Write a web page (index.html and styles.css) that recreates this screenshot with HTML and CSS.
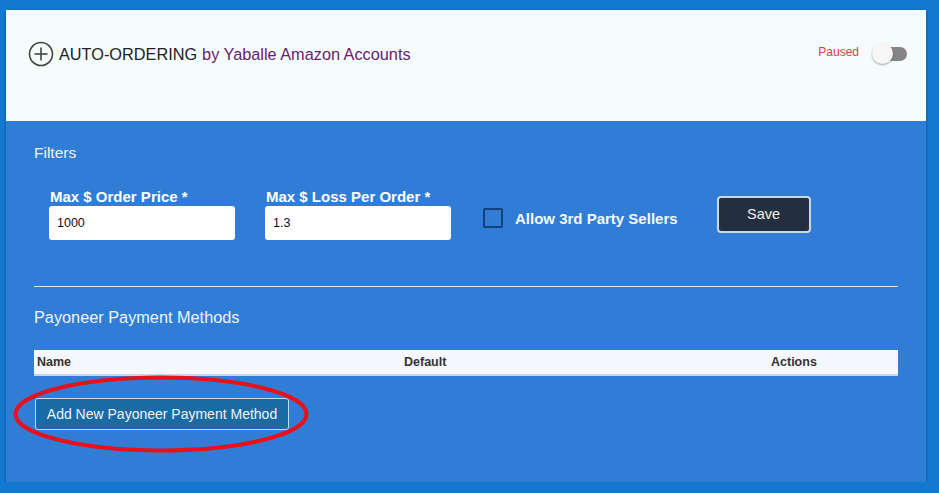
FILE: index.html
```html
<!DOCTYPE html>
<html lang="en">
<head>
    <meta charset="UTF-8">
    <title>Auto-Ordering</title>
    <link rel="stylesheet" href="styles.css">
</head>
<body>
    <div class="card">
        <!-- Cabecera -->
        <div class="card-header">
            <div class="titulo">
                <svg class="icono-mas" width="26" height="26" viewBox="0 0 26 26">
                    <circle cx="13" cy="13" r="11.5" fill="none" stroke="#444" stroke-width="1.6"/>
                    <line x1="13" y1="6.5" x2="13" y2="19.5" stroke="#444" stroke-width="1.6"/>
                    <line x1="6.5" y1="13" x2="19.5" y2="13" stroke="#444" stroke-width="1.6"/>
                </svg>
                <span>AUTO-ORDERING</span> <span class="cuenta">by Yaballe Amazon Accounts</span>
            </div>
            <div class="estado">
                <span class="pausado">Paused</span>
                <div class="switch"><div class="switch-knob"></div></div>
            </div>
        </div>

        <div class="card-body">
            <div class="seccion-titulo">Filters</div>
            <div class="filtros">
                <div class="campo">
                    <label for="maxPrecio">Max $ Order Price *</label>
                    <input type="text" id="maxPrecio" value="1000">
                </div>
                <div class="campo">
                    <label for="maxPerdida">Max $ Loss Per Order *</label>
                    <input type="text" id="maxPerdida" value="1.3">
                </div>
                <div class="check">
                    <span class="check-box"></span>
                    <span>Allow 3rd Party Sellers</span>
                </div>
                <button class="btn-save">Save</button>
            </div>

            <hr class="separador">

            <div class="seccion-titulo seccion-pagos">Payoneer Payment Methods</div>
            <div class="tabla">
                <div>Name</div>
                <div>Default</div>
                <div>Actions</div>
            </div>

            <div class="agregar">
                <button class="btn-agregar">Add New Payoneer Payment Method</button>
                <!-- Marca roja sobre el botón -->
                <svg class="marca" width="296" height="78" viewBox="0 0 296 78">
                    <ellipse cx="148" cy="39" rx="145.5" ry="36.5" fill="none" stroke="#e8101a" stroke-width="4"/>
                </svg>
            </div>
        </div>
    </div>
</body>
</html>
```

FILE: styles.css
```css
/* Cuerpo */
body {
    margin: 0;
    background-color: #1479d1;
    font-family: "Liberation Sans", Arial, sans-serif;
}

/* Tarjeta principal */
.card {
    margin: 10px 0 0 6px;
    width: 920px;
    height: 472px;
    background-color: #317dd6;
    box-shadow: 0 1px 3px rgba(0, 0, 0, 0.35);
}

.card-header {
    height: 111px;
    box-sizing: border-box;
    background-color: #f4fdfb;
    display: flex;
    align-items: flex-start;
    justify-content: space-between;
    padding: 31px 19px 0 22px;
}

.titulo {
    display: flex;
    align-items: center;
    font-size: 16.3px;
    color: #222;
}

.icono-mas {
    margin-right: 5px;
}

.cuenta {
    color: #6b1a70;
    margin-left: 5px;
}

.estado {
    display: flex;
    align-items: center;
    margin-top: 2px;
}

.pausado {
    color: #d0463a;
    font-size: 12px;
    margin-right: 13px;
    margin-top: -4px;
}

/* Interruptor */
.switch {
    position: relative;
    width: 35px;
    height: 22px;
    display: flex;
    align-items: center;
}

.switch::before {
    content: "";
    display: block;
    margin-left: 6px;
    width: 29px;
    height: 14px;
    border-radius: 7px;
    background-color: #858585;
}

.switch-knob {
    position: absolute;
    left: 0;
    top: 0;
    width: 21px;
    height: 21px;
    border-radius: 50%;
    background-color: #f7f7f7;
    box-shadow: 0 1px 2px rgba(0, 0, 0, 0.35);
}

/* Contenido */
.card-body {
    padding: 22px 28px 0 28px;
    color: #fff;
}

.seccion-titulo {
    font-size: 15.5px;
    line-height: 20px;
    color: #eef4fb;
}

.filtros {
    display: flex;
    align-items: flex-start;
    padding-left: 15px;
    margin-top: 26px;
}

.campo {
    display: flex;
    flex-direction: column;
    margin-right: 30px;
}

.campo label {
    font-size: 15px;
    font-weight: bold;
    line-height: 16px;
    padding-left: 1px;
}

.campo input {
    width: 186px;
    height: 34px;
    box-sizing: border-box;
    border: none;
    border-radius: 3px;
    padding: 0 8px;
    font-family: "Liberation Sans", Arial, sans-serif;
    font-size: 12.5px;
    color: #111;
    margin-top: 1px;
}

.check {
    display: flex;
    align-items: center;
    margin-top: 19px;
    margin-left: 2px;
    font-size: 15px;
    font-weight: bold;
    color: #f4f8fd;
}

.check-box {
    width: 16px;
    height: 16px;
    border: 2px solid #14427e;
    border-radius: 2px;
    margin-right: 12px;
}

.btn-save {
    margin-left: 39px;
    margin-top: 7px;
    width: 94px;
    height: 37px;
    background-color: #232f3f;
    color: #f0f0f0;
    border: 2px solid #c8d7ea;
    border-radius: 4px;
    font-family: "Liberation Sans", Arial, sans-serif;
    font-size: 14.5px;
    padding-bottom: 2px;
}

.separador {
    border: none;
    border-top: 1px solid #dce8f6;
    margin: 46px 0 0 0;
}

.seccion-pagos {
    font-size: 16.3px;
    margin-top: 20px;
}

/* Tabla de métodos de pago */
.tabla {
    display: grid;
    grid-template-columns: 367px 367px 1fr;
    margin-top: 23px;
    height: 24px;
    line-height: 25px;
    padding-left: 3px;
    background-color: #f5f7fc;
    border-bottom: 2px solid #c3d6ee;
    font-size: 12.5px;
    font-weight: bold;
    color: #333;
}

.agregar {
    position: relative;
    margin-top: 22px;
}

.btn-agregar {
    margin-left: 1px;
    width: 254px;
    height: 32px;
    background-color: #1a6aa3;
    color: #eef4fb;
    border: 1px solid #c6dbef;
    border-radius: 3px;
    font-family: "Liberation Sans", Arial, sans-serif;
    font-size: 14px;
}

.marca {
    position: absolute;
    left: -21px;
    top: -23px;
}
```
